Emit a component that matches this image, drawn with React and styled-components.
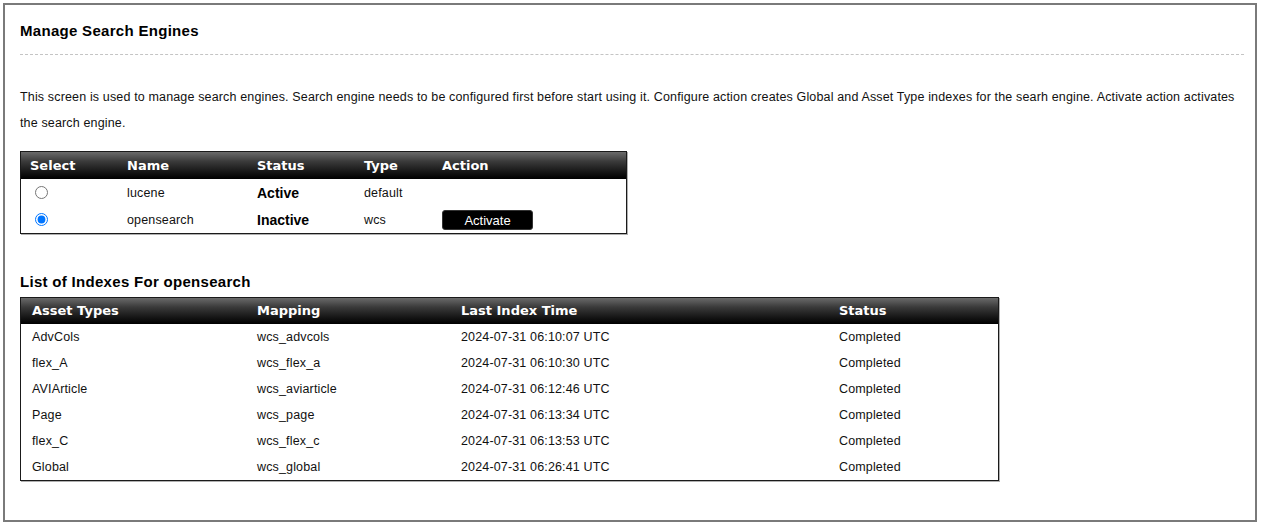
import React from "react";
import styled, { createGlobalStyle } from "styled-components";

const Global = createGlobalStyle`
  html, body { margin: 0; padding: 0; background: #fff; }
  body { font-family: "Liberation Sans", Arial, sans-serif; color: #111; }
`;

const Page = styled.div`
  box-sizing: border-box;
  margin: 3px 4px 0 3px;
  height: 519px;
  border: 2px solid #7a7a7a;
  padding: 16px 11px 0 15px;
`;

const Title = styled.h1`
  margin: 0;
  font-size: 15px;
  line-height: 20px;
  font-weight: bold;
  letter-spacing: 0.3px;
  color: #000;
  padding-bottom: 13px;
  border-bottom: 1px dashed #c4c4c4;
`;

const Intro = styled.p`
  margin: 29px 0 0;
  font-size: 12.5px;
  letter-spacing: 0.15px;
  line-height: 26px;
  color: #111;
`;

const SubTitle = styled.h2`
  margin: 38px 0 0;
  font-size: 15px;
  line-height: 20px;
  font-weight: bold;
  letter-spacing: 0.3px;
  color: #000;
`;

const Table = styled.div`
  width: ${(p) => p.$width}px;
  box-sizing: border-box;
  border: 1px solid #1a1a1a;
  box-shadow: 1px 1px 0 #b0b0b0;
  margin-top: ${(p) => p.$top}px;
  background: #fff;
`;

const HeadRow = styled.div`
  display: grid;
  grid-template-columns: ${(p) => p.$cols};
  height: ${(p) => p.$h}px;
  align-items: center;
  background: linear-gradient(#6a6a6a 0%, #3a3a3a 35%, #151515 75%, #000 100%);
`;

const HeadCell = styled.div`
  padding-left: ${(p) => p.$pad}px;
  font-family: "DejaVu Sans", Verdana, sans-serif;
  font-weight: bold;
  font-size: 13px;
  line-height: 16px;
  color: #fff;
  white-space: nowrap;
`;

const Row = styled.div`
  display: grid;
  grid-template-columns: ${(p) => p.$cols};
  height: ${(p) => p.$h}px;
  align-items: center;
`;

const Cell = styled.div`
  padding-left: ${(p) => p.$pad}px;
  font-size: 12.5px;
  letter-spacing: 0.15px;
  color: #111;
  white-space: nowrap;
  display: flex;
  align-items: center;
`;

const StatusText = styled.span`
  font-weight: bold;
  font-size: 14px;
  letter-spacing: 0;
  color: #000;
`;

const Radio = styled.input`
  margin: 0 0 0 5px;
  width: 13px;
  height: 13px;
`;

const ActionButton = styled.button`
  width: 91px;
  height: 20px;
  border: 1px solid #333;
  border-radius: 3px;
  background: #000;
  color: #fff;
  font-family: "Liberation Sans", Arial, sans-serif;
  font-size: 13px;
  letter-spacing: 0;
  padding: 0;
  cursor: pointer;
  margin-top: 1px;
`;

const engineCols = "97px 130px 107px 78px 1fr";
const indexCols = "225px 204px 378px 1fr";

const engines = [
  { name: "lucene", status: "Active", type: "default", checked: false },
  { name: "opensearch", status: "Inactive", type: "wcs", checked: true },
];

const indexes = [
  ["AdvCols", "wcs_advcols", "2024-07-31 06:10:07 UTC"],
  ["flex_A", "wcs_flex_a", "2024-07-31 06:10:30 UTC"],
  ["AVIArticle", "wcs_aviarticle", "2024-07-31 06:12:46 UTC"],
  ["Page", "wcs_page", "2024-07-31 06:13:34 UTC"],
  ["flex_C", "wcs_flex_c", "2024-07-31 06:13:53 UTC"],
  ["Global", "wcs_global", "2024-07-31 06:26:41 UTC"],
];

export default function App() {
  return (
    <>
      <Global />
      <Page>
        <Title>Manage Search Engines</Title>
        <Intro>
          This screen is used to manage search engines. Search engine needs to be configured first before start using it.
          Configure action creates Global and Asset Type indexes for the searh engine. Activate action activates the search
          engine.
        </Intro>
        <Table $width={607} $top={15}>
          <HeadRow $cols={engineCols} $h={27}>
            {["Select", "Name", "Status", "Type", "Action"].map((h) => (
              <HeadCell key={h} $pad={9}>{h}</HeadCell>
            ))}
          </HeadRow>
          {engines.map((e) => (
            <Row key={e.name} $cols={engineCols} $h={27}>
              <Cell $pad={9}>
                <Radio type="radio" name="engine" defaultChecked={e.checked} />
              </Cell>
              <Cell $pad={9}>{e.name}</Cell>
              <Cell $pad={9}>
                <StatusText>{e.status}</StatusText>
              </Cell>
              <Cell $pad={9}>{e.type}</Cell>
              <Cell $pad={9}>{e.status === "Inactive" && <ActionButton>Activate</ActionButton>}</Cell>
            </Row>
          ))}
        </Table>
        <SubTitle>List of Indexes For opensearch</SubTitle>
        <Table $width={979} $top={5}>
          <HeadRow $cols={indexCols} $h={26}>
            {["Asset Types", "Mapping", "Last Index Time", "Status"].map((h) => (
              <HeadCell key={h} $pad={11}>{h}</HeadCell>
            ))}
          </HeadRow>
          {indexes.map(([a, m, t]) => (
            <Row key={a} $cols={indexCols} $h={26}>
              <Cell $pad={11}>{a}</Cell>
              <Cell $pad={11}>{m}</Cell>
              <Cell $pad={11}>{t}</Cell>
              <Cell $pad={11}>Completed</Cell>
            </Row>
          ))}
        </Table>
      </Page>
    </>
  );
}
